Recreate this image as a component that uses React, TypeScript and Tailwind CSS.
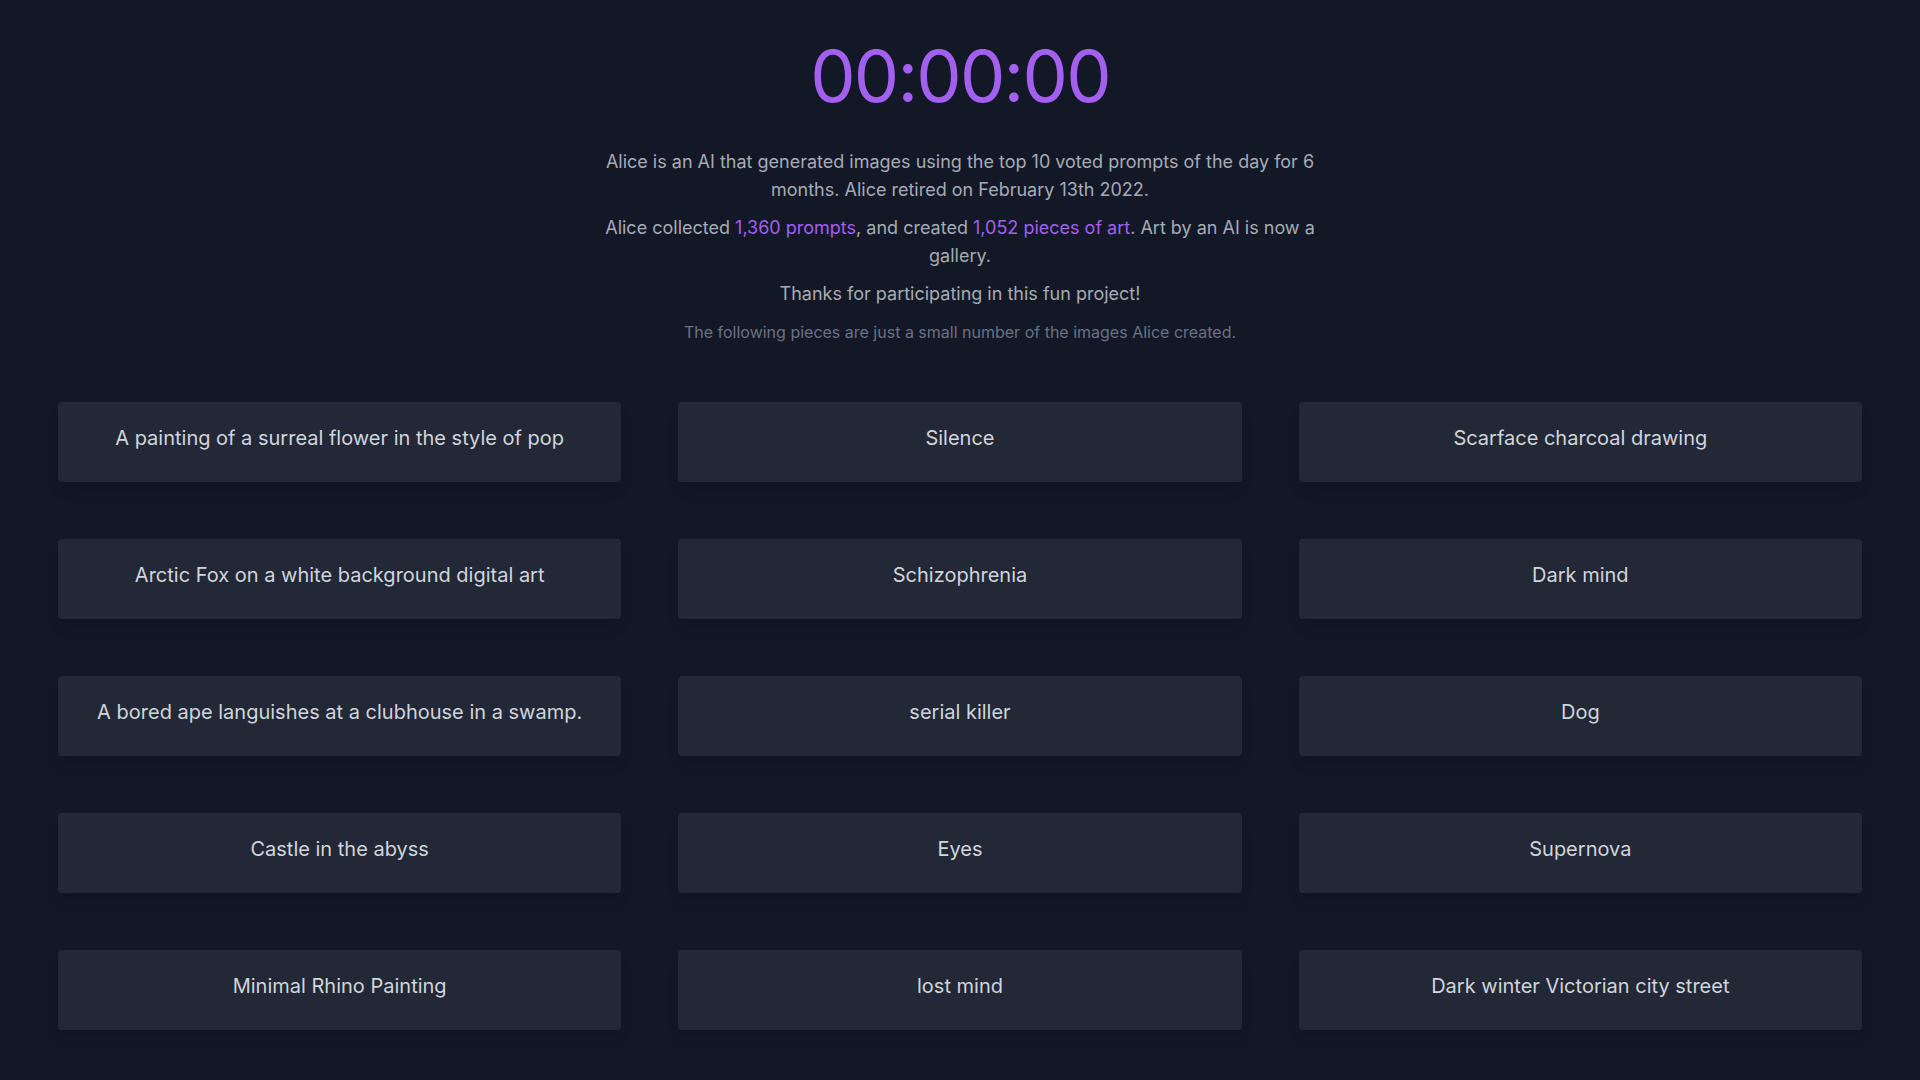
const prompts = [
  "A painting of a surreal flower in the style of pop",
  "Silence",
  "Scarface charcoal drawing",
  "Arctic Fox on a white background digital art",
  "Schizophrenia",
  "Dark mind",
  "A bored ape languishes at a clubhouse in a swamp.",
  "serial killer",
  "Dog",
  "Castle in the abyss",
  "Eyes",
  "Supernova",
  "Minimal Rhino Painting",
  "lost mind",
  "Dark winter Victorian city street",
];

const App = () => {
  return (
    <div className="min-h-screen bg-[#131826] font-['Inter','Noto_Sans',sans-serif] text-gray-300">
      <div className="flex flex-col items-center px-[58px] pt-10 pb-14">
        <h1 className="text-7xl leading-none font-normal text-[#a25ff0] tracking-tight">00:00:00</h1>

        <div className="mt-[36px] max-w-3xl text-center text-lg leading-7 text-[#a6abb5]">
          <p>
            Alice is an AI that generated images using the top 10 voted prompts of the day for 6 months. Alice
            retired on February 13th 2022.
          </p>
          <p className="mt-2.5">
            Alice collected <span className="text-[#a25ff0]">1,360 prompts</span>, and created{" "}
            <span className="text-[#a25ff0]">1,052 pieces of art</span>. Art by an AI is now a gallery.
          </p>
          <p className="mt-2.5">Thanks for participating in this fun project!</p>
          <p className="mt-3 text-base leading-6 text-gray-500">
            The following pieces are just a small number of the images Alice created.
          </p>
        </div>

        <div className="mt-[58px] grid w-full grid-cols-3 gap-[57px]">
          {prompts.map((p) => (
            <div
              key={p}
              className="flex h-20 items-center justify-center rounded-sm bg-[#222836] px-6 pb-2 text-xl text-gray-300 shadow-lg"
            >
              {p}
            </div>
          ))}
        </div>
      </div>
    </div>
  );
};

export default App;
